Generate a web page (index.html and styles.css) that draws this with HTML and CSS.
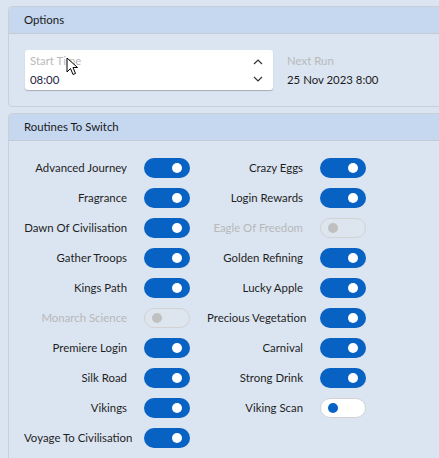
FILE: index.html
```html
<!DOCTYPE html>
<html lang="en">
<head>
  <meta charset="UTF-8">
  <title>Routine Scheduler</title>
  <link rel="stylesheet" href="styles.css">
</head>
<body>

  <div class="panel">
    <div class="panel-header">Options</div>
    <div class="panel-body options">
      <div class="time-box">
        <div class="time-fields">
          <span class="hint">Start Time</span>
          <span class="time-value">08:00</span>
        </div>
        <div class="spin">
          <svg width="10" height="6" viewBox="0 0 10 6"><path d="M1 5 L5 1 L9 5" fill="none" stroke="#333" stroke-width="1.2"/></svg>
          <svg width="10" height="6" viewBox="0 0 10 6"><path d="M1 1 L5 5 L9 1" fill="none" stroke="#333" stroke-width="1.2"/></svg>
        </div>
      </div>
      <div class="next-run">
        <span class="hint">Next Run</span>
        <span class="next-value">25 Nov 2023 8:00</span>
      </div>
    </div>
  </div>

  <div class="panel">
    <div class="panel-header">Routines To Switch</div>
    <div class="panel-body routines">
      <span class="label">Advanced Journey</span><span class="toggle on"></span>
      <span class="label">Crazy Eggs</span><span class="toggle on"></span>

      <span class="label">Fragrance</span><span class="toggle on"></span>
      <span class="label">Login Rewards</span><span class="toggle on"></span>

      <span class="label">Dawn Of Civilisation</span><span class="toggle on"></span>
      <span class="label disabled">Eagle Of Freedom</span><span class="toggle off-disabled"></span>

      <span class="label">Gather Troops</span><span class="toggle on"></span>
      <span class="label">Golden Refining</span><span class="toggle on"></span>

      <span class="label">Kings Path</span><span class="toggle on"></span>
      <span class="label">Lucky Apple</span><span class="toggle on"></span>

      <span class="label disabled">Monarch Science</span><span class="toggle off-disabled"></span>
      <span class="label">Precious Vegetation</span><span class="toggle on"></span>

      <span class="label">Premiere Login</span><span class="toggle on"></span>
      <span class="label">Carnival</span><span class="toggle on"></span>

      <span class="label">Silk Road</span><span class="toggle on"></span>
      <span class="label">Strong Drink</span><span class="toggle on"></span>

      <span class="label">Vikings</span><span class="toggle on"></span>
      <span class="label">Viking Scan</span><span class="toggle off"></span>

      <span class="label">Voyage To Civilisation</span><span class="toggle on"></span>
    </div>
  </div>

  <!-- mouse pointer sitting over the time box -->
  <svg class="cursor" width="13" height="20" viewBox="0 0 13 20">
    <path d="M1 1 L1 15 L4.5 11.5 L7 17.5 L9.5 16.5 L7 10.5 L11.5 10.5 Z" fill="#fff" stroke="#000" stroke-width="1"/>
  </svg>

</body>
</html>
```

FILE: styles.css
```css
body {
  margin: 0;
  padding: 6px 0 0 8px;
  font-family: Lato, "Noto Sans", Arial, sans-serif;
  font-size: 11.4px;
  background: #dbe5f1;
  color: #1f1f1f;
  overflow: hidden;
  height: 458px;
  box-sizing: border-box;
  position: relative;
}

.panel {
  width: 480px;
  border: 1px solid #c9d0d8;
  border-radius: 4px;
  margin-bottom: 6px;
  background: #dbe5f1;
}

.panel-header {
  background: #c5d8ef;
  border-bottom: 1px solid #c4cbd4;
  height: 26px;
  line-height: 26px;
  padding-left: 15px;
  border-radius: 4px 4px 0 0;
  color: #1a1a1a;
}

.panel-body {
  padding: 16px;
}

.options {
  display: flex;
  gap: 14px;
}

.time-box {
  width: 248px;
  height: 40px;
  background: #fff;
  border-radius: 3px;
  box-shadow: 0 1px 1px rgba(0, 0, 0, 0.25);
  display: flex;
  justify-content: space-between;
  box-sizing: border-box;
  padding: 0 10px 0 5px;
}

.time-fields,
.next-run {
  display: flex;
  flex-direction: column;
  padding-top: 1px;
}

.time-fields span,
.next-run span {
  height: 19px;
  line-height: 19px;
}

.hint {
  color: #b9b9b9;
}

.time-value {
  color: #1c2340;
}

.next-value {
  color: #1a1a1a;
}

.spin {
  display: flex;
  flex-direction: column;
  justify-content: center;
  gap: 11px;
}

.routines {
  display: grid;
  grid-template-columns: 103px 46px 96px 46px;
  column-gap: 17px;
  row-gap: 10px;
  padding: 17px 15px;
}

.label {
  text-align: right;
  height: 20px;
  line-height: 20px;
  white-space: nowrap;
}

.label.disabled {
  color: #b8b8b8;
}

.toggle {
  width: 46px;
  height: 20px;
  border-radius: 10px;
  box-sizing: border-box;
  position: relative;
}

.toggle::after {
  content: "";
  position: absolute;
  top: 5px;
  width: 10px;
  height: 10px;
  border-radius: 50%;
}

.toggle.on {
  background: #0762c3;
}

.toggle.on::after {
  right: 8px;
  background: #fff;
}

.toggle.off {
  background: #fff;
  border: 1px solid #cfd3d8;
}

.toggle.off::after {
  top: 4px;
  left: 7px;
  background: #0762c3;
}

.toggle.off-disabled {
  border: 1px solid #d2d2d2;
  background: #dde5ef;
}

.toggle.off-disabled::after {
  top: 4px;
  left: 7px;
  background: #c0c0c0;
}

.cursor {
  position: absolute;
  left: 66px;
  top: 57px;
}
```
